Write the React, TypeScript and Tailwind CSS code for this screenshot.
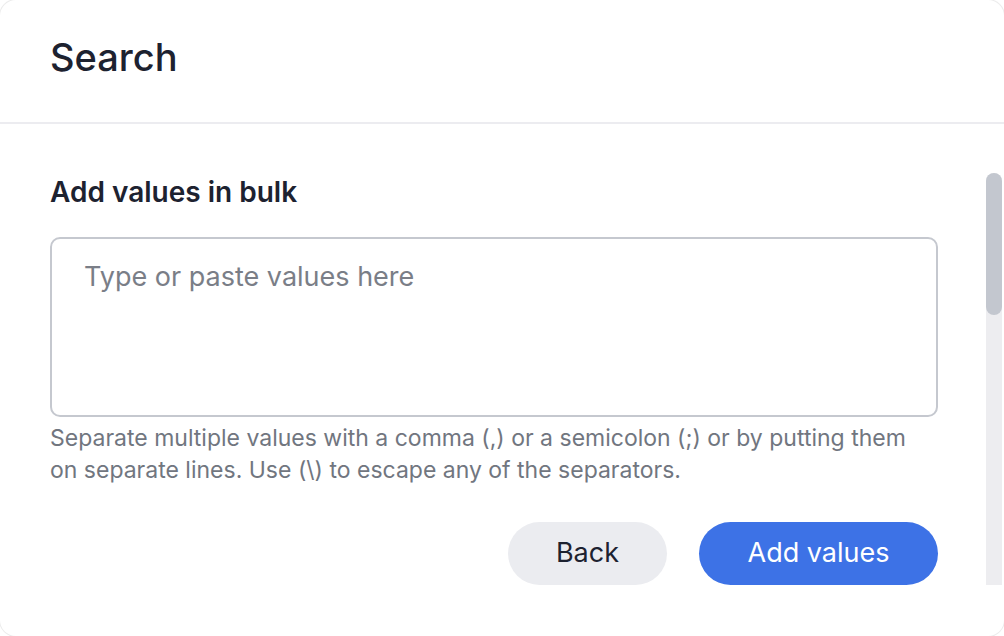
import React from "react";

const font = { fontFamily: "Inter, 'Noto Sans', sans-serif" };

/** Decorative scrollbar beside the dialog body. */
function Scrollbar() {
  return (
    <div className="w-4 shrink-0 bg-[#ededf0] rounded-t-lg mr-[2px]">
      <div className="h-[142px] w-4 rounded-full bg-[#c3c7cf]" />
    </div>
  );
}

export default function App() {
  return (
    <div className="w-[1004px] h-[636px] bg-white" style={font}>
      <div className="flex h-full flex-col rounded-[16px] bg-white ring-1 ring-[#ececec]">
        <div className="flex h-[124px] shrink-0 items-center border-b-2 border-[#ececf0] px-[50px] pb-[8px]">
          <h1 className="text-[38px] font-medium leading-none text-[#1d2230]">Search</h1>
        </div>

        <div className="flex flex-1 pt-[49px] pb-[51px]">
          <div className="ml-[50px] w-[888px] shrink-0">
            <h2 className="mt-[5px] text-[28px] font-semibold leading-[28px] text-[#1d2230]">
              Add values in bulk
            </h2>
            <textarea
              className="mt-[31px] block h-[180px] w-full resize-none rounded-[10px] border-2 border-[#c5c8cf] px-[32px] py-[22px] text-[27px] leading-[32px] text-[#1d2230] outline-none placeholder:text-[#7a7e87]"
              placeholder="Type or paste values here"
            />
            <p className="mt-[5px] text-[23px] leading-[32px] text-[#71767f]">
              Separate multiple values with a comma (,) or a semicolon (;) or by putting them on separate lines. Use (\) to escape any of the separators.
            </p>
            <div className="mt-[36px] flex justify-end gap-[32px]">
              <button className="h-[63px] w-[159px] rounded-full bg-[#ebecf0] text-[27px] text-[#1d2230]">
                Back
              </button>
              <button className="h-[63px] w-[239px] rounded-full bg-[#3d72e6] text-[27px] text-white">
                Add values
              </button>
            </div>
          </div>
          <div className="flex-1" />
          <Scrollbar />
        </div>
      </div>
    </div>
  );
}
